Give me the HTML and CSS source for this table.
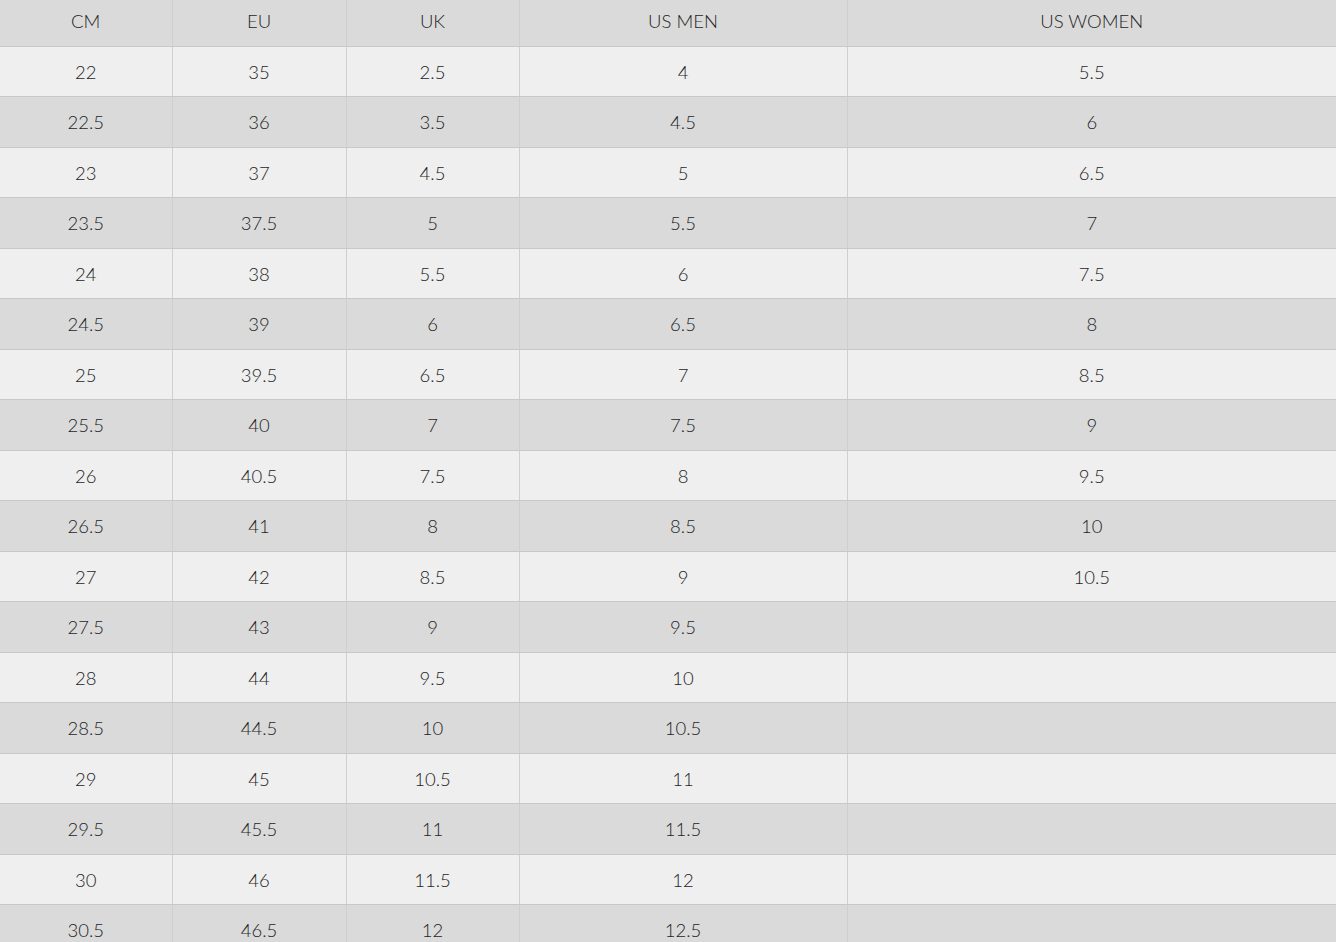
FILE: index.html
```html
<!DOCTYPE html>
<html>
<head>
<meta charset="utf-8">
<link rel="stylesheet" href="styles.css">
</head>
<body>
<table class="size-table">
<colgroup>
<col class="c1"><col class="c2"><col class="c3"><col class="c4"><col class="c5">
</colgroup>
<thead>
<tr><th>CM</th><th>EU</th><th>UK</th><th>US MEN</th><th>US WOMEN</th></tr>
</thead>
<tbody>
<tr><td>22</td><td>35</td><td>2.5</td><td>4</td><td>5.5</td></tr>
<tr><td>22.5</td><td>36</td><td>3.5</td><td>4.5</td><td>6</td></tr>
<tr><td>23</td><td>37</td><td>4.5</td><td>5</td><td>6.5</td></tr>
<tr><td>23.5</td><td>37.5</td><td>5</td><td>5.5</td><td>7</td></tr>
<tr><td>24</td><td>38</td><td>5.5</td><td>6</td><td>7.5</td></tr>
<tr><td>24.5</td><td>39</td><td>6</td><td>6.5</td><td>8</td></tr>
<tr><td>25</td><td>39.5</td><td>6.5</td><td>7</td><td>8.5</td></tr>
<tr><td>25.5</td><td>40</td><td>7</td><td>7.5</td><td>9</td></tr>
<tr><td>26</td><td>40.5</td><td>7.5</td><td>8</td><td>9.5</td></tr>
<tr><td>26.5</td><td>41</td><td>8</td><td>8.5</td><td>10</td></tr>
<tr><td>27</td><td>42</td><td>8.5</td><td>9</td><td>10.5</td></tr>
<tr><td>27.5</td><td>43</td><td>9</td><td>9.5</td><td></td></tr>
<tr><td>28</td><td>44</td><td>9.5</td><td>10</td><td></td></tr>
<tr><td>28.5</td><td>44.5</td><td>10</td><td>10.5</td><td></td></tr>
<tr><td>29</td><td>45</td><td>10.5</td><td>11</td><td></td></tr>
<tr><td>29.5</td><td>45.5</td><td>11</td><td>11.5</td><td></td></tr>
<tr><td>30</td><td>46</td><td>11.5</td><td>12</td><td></td></tr>
<tr><td>30.5</td><td>46.5</td><td>12</td><td>12.5</td><td></td></tr>
</tbody>
</table>
</body>
</html>
```
FILE: styles.css
```css
html, body {
  margin: 0;
  padding: 0;
  background: #efefef;
  overflow: hidden;
}
.size-table {
  width: 1336px;
  table-layout: fixed;
  border-collapse: collapse;
  font-family: Lato, "Liberation Sans", sans-serif;
  font-weight: 300;
  font-size: 18.5px;
  color: #1e1e1e;
}
.c1 { width: 172px; }
.c2 { width: 174px; }
.c3 { width: 173px; }
.c4 { width: 328px; }
.c5 { width: 489px; }
.size-table th,
.size-table td {
  text-align: center;
  vertical-align: middle;
  padding: 0;
  border-bottom: 1px solid #c8c8c8;
  border-left: 1px solid #cfcfcf;
}
.size-table th:first-child,
.size-table td:first-child {
  border-left: none;
}
.size-table th {
  font-weight: 300;
  height: 46px;
  background: #dadada;
  padding-bottom: 4px;
  box-sizing: border-box;
}
.size-table td {
  height: 50.5px;
  padding-top: 1px;
  box-sizing: border-box;
}
.size-table tbody tr:nth-child(odd) td { background: #efefef; }
.size-table tbody tr:nth-child(even) td { background: #dadada; }
```
